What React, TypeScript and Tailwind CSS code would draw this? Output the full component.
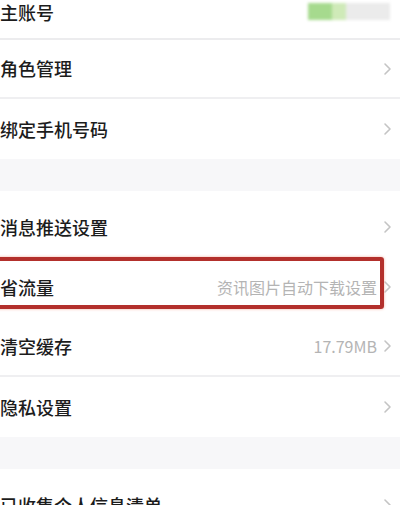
import React from 'react';

const Chevron = () => (
  <svg width="9" height="14" viewBox="0 0 9 14" className="shrink-0">
    <path d="M2 2l5 5-5 5" fill="none" stroke="#c4c4c4" strokeWidth="1.6" strokeLinecap="round" strokeLinejoin="round" />
  </svg>
);

const Row = ({ label, value, h = 'h-[60px]', border = true, extra = '' }: { label: string; value?: string; h?: string; border?: boolean; extra?: string }) => (
  <div className={`${h} ${extra} flex items-center justify-between pr-[8px] ${border ? 'border-b-2 border-[#efeff1]' : ''}`}>
    <span className="text-[18px] text-[#1c1c1c] font-medium">{label}</span>
    <div className="flex items-center gap-[6px]">
      {value && <span className="text-[16px] text-[#b4b4b4]">{value}</span>}
      <Chevron />
    </div>
  </div>
);

const Gap = () => <div className="h-[32px] bg-[#f7f7f9]" />;

export default function App() {
  return (
    <div className="w-[400px] h-[505px] overflow-hidden bg-white relative" style={{ fontFamily: '"Noto Sans CJK SC", "Noto Sans", sans-serif' }}>
      {/* 主账号 */}
      <div className="h-[40px] flex items-start justify-between border-b-2 border-[#ececee]">
        <span className="text-[18px] text-[#1c1c1c] font-medium -mt-[1px]">主账号</span>
        <div className="flex mt-[3px] mr-[10px] h-[17px] blur-[1.5px]">
          <div className="w-[24px] bg-[#a6da8e]" />
          <div className="w-[14px] bg-[#cfeab8]" />
          <div className="w-[44px] bg-[#ebebeb]" />
        </div>
      </div>
      <Row label="角色管理" h="h-[59px]" />
      <Row label="绑定手机号码" border={false} />
      <Gap />
      <Row label="消息推送设置" h="h-[66px]" extra="pt-[6px]" border={false} />
      <Row label="省流量" value="资讯图片自动下载设置" border={false} />
      <Row label="清空缓存" value="17.79MB" />
      <Row label="隐私设置" border={false} />
      <Gap />
      <Row label="已收集个人信息清单" h="h-[72px]" border={false} />

      {/* red highlight */}
      <div className="absolute left-[-10px] top-[257px] w-[394px] h-[52px] border-[4px] border-[#b3302c] rounded-[3px] shadow-[0_0_3px_#f3b0a0]" />
    </div>
  );
}
